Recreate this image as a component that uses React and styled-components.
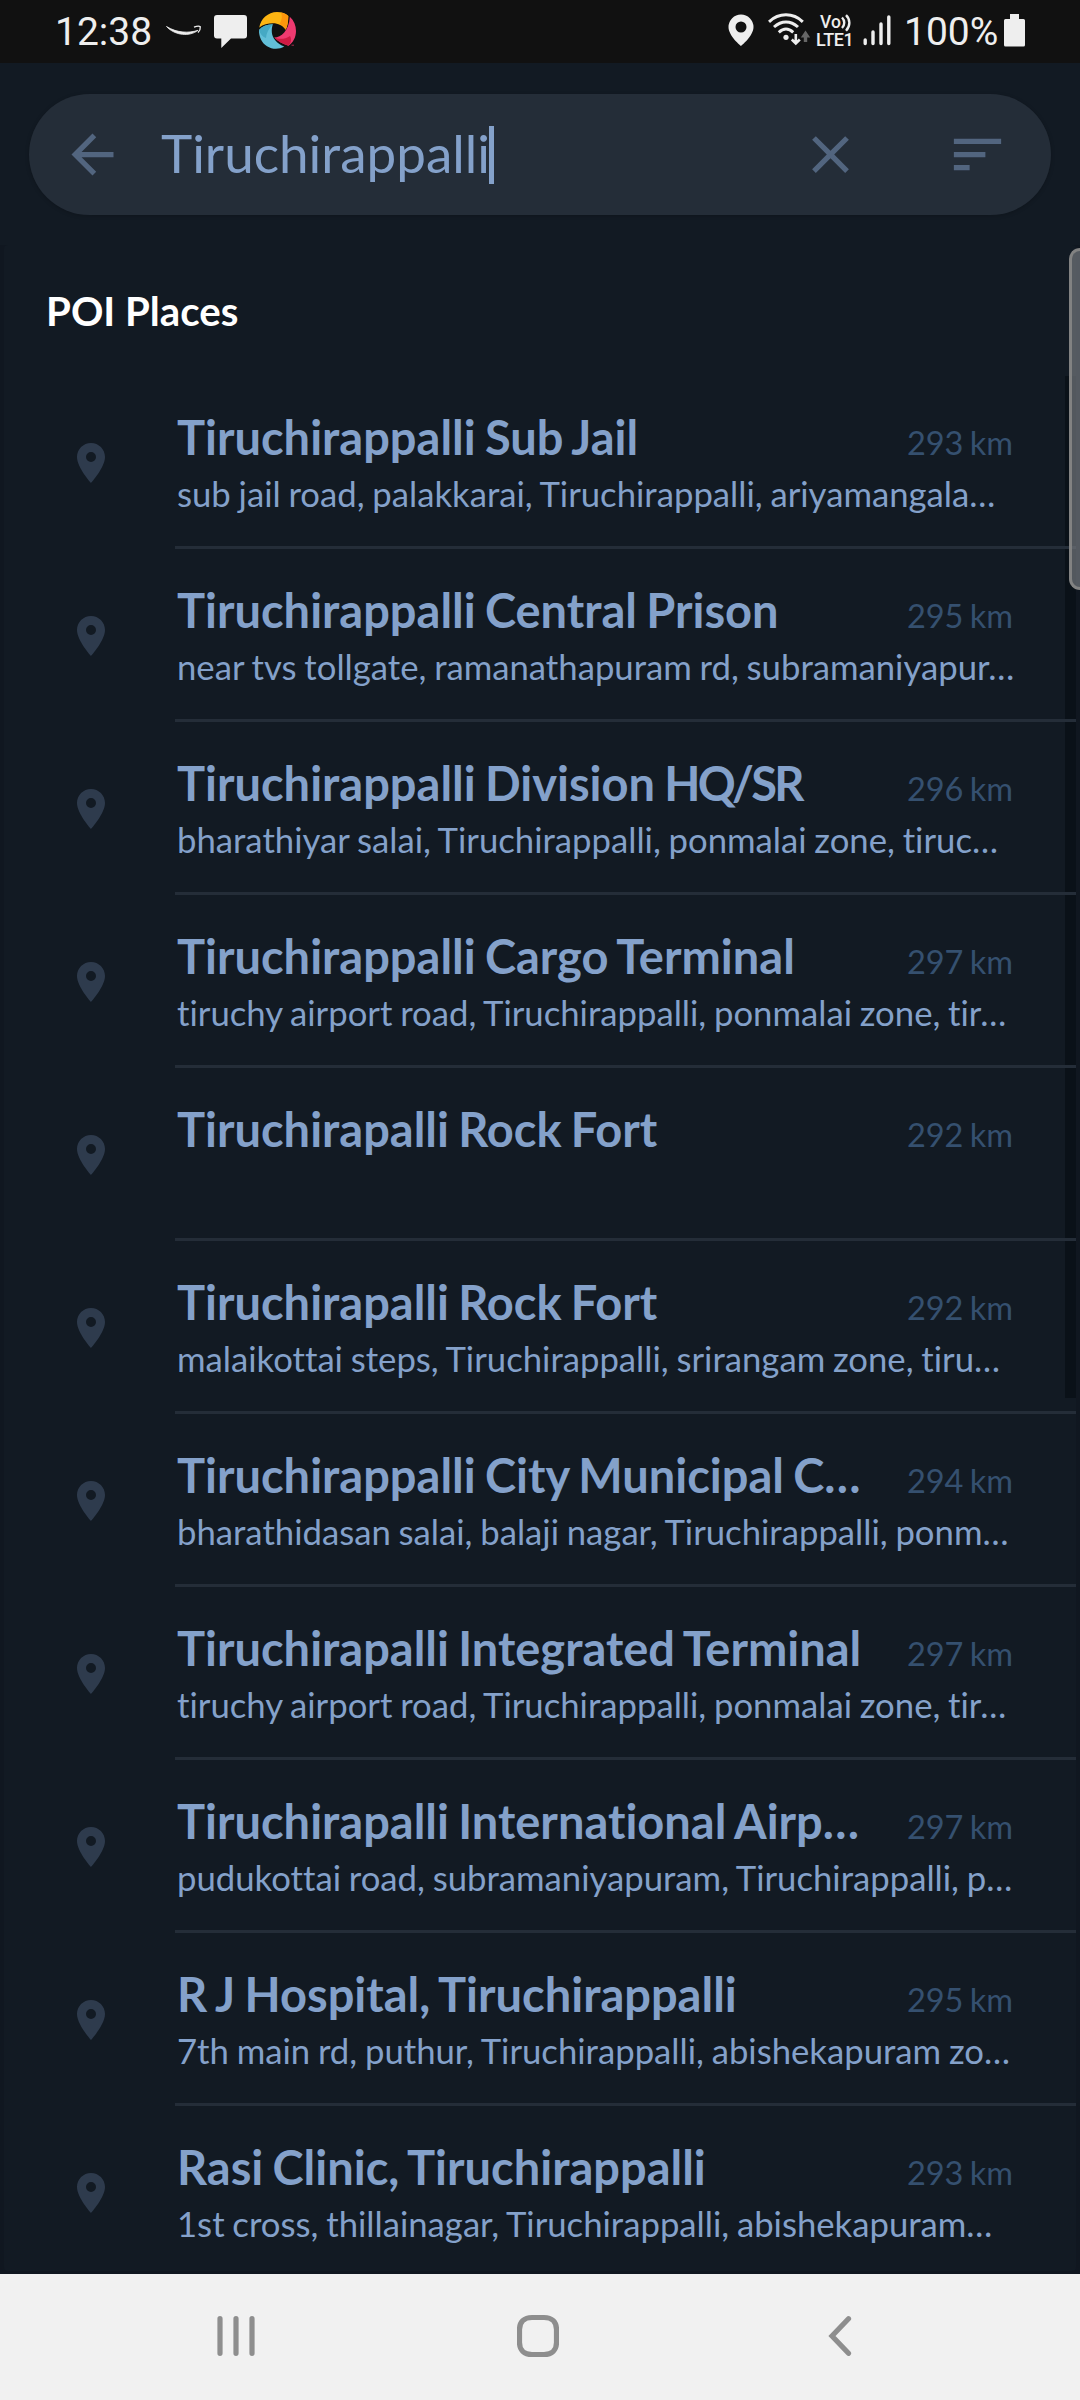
import React from "react";
import styled, { createGlobalStyle } from "styled-components";

const GlobalStyle = createGlobalStyle`
  * { box-sizing: border-box; }
  html, body { margin: 0; padding: 0; background: #121a23; }
  svg { display: block; flex: none; }
`;

const Screen = styled.div`
  width: 1080px;
  height: 2400px;
  display: flex;
  flex-direction: column;
  overflow: hidden;
  background: #121a23;
  font-family: Lato, "Open Sans", sans-serif;
  font-variant-ligatures: none;
`;

const StatusBar = styled.header`
  flex: none;
  height: 63px;
  display: flex;
  justify-content: space-between;
  background: #111111;
  color: #eeeeee;
  font-family: Roboto, sans-serif;
  padding: 0 55px 0 55px;
`;

const StatusGroup = styled.div`
  display: flex;
  align-items: flex-start;
`;

const StatusText = styled.span`
  width: ${(p) => p.$width}px;
  margin-left: ${(p) => p.$gap || 0}px;
  font-size: 39px;
  line-height: 46px;
  padding-top: 9px;
  white-space: nowrap;
`;

const StatusIcon = styled.svg`
  width: ${(p) => p.$width}px;
  height: 63px;
  margin-left: ${(p) => p.$gap || 0}px;
`;

const Volte = styled.div`
  width: 40px;
  height: 63px;
  margin-left: 5px;
  padding-top: 12px;
  font-weight: 500;
`;

const VolteTop = styled.div`
  display: flex;
  padding-left: 4px;
  height: 18px;
  font-size: 17.5px;
  line-height: 20px;
`;

const VolteBottom = styled.div`
  font-size: 18px;
  line-height: 20px;
  letter-spacing: -0.4px;
`;

const SearchArea = styled.div`
  flex: none;
  height: 182px;
  padding: 31px 29px 0 29px;
`;

const SearchBar = styled.div`
  height: 121px;
  border-radius: 61px;
  background: #242d38;
  box-shadow: 0 1px 4px rgba(0, 0, 0, 0.2);
  display: flex;
  align-items: center;
  padding: 0 42px 0 32px;
  color: #52657f;
`;

const SearchField = styled.div`
  flex: 1;
  display: flex;
  align-items: center;
  margin-left: 37px;
`;

const Query = styled.span`
  padding-bottom: 4px;
  color: #84a1ca;
  font-size: 53px;
  line-height: 64px;
  white-space: nowrap;
`;

const Caret = styled.span`
  width: 5px;
  height: 58px;
  margin-left: -1px;
  background: #84a1ca;
`;

const ToolIcon = styled.svg`
  width: 63px;
  height: 63px;
  fill: currentColor;
  margin-left: ${(p) => p.$gap || 0}px;
`;

const Panel = styled.main`
  position: relative;
  flex: none;
  height: 2029px;
  background: #101720;
  padding: 0 4px 3px;
`;

const Card = styled.section`
  position: relative;
  height: 2026px;
  background: #121a23;
  border-radius: 4px;
  overflow: hidden;
`;

const SectionTitle = styled.h2`
  margin: 0;
  height: 131px;
  padding: 40px 0 0 42px;
  color: #ffffff;
  font-size: 40.2px;
  font-weight: 700;
  line-height: 51px;
`;

const List = styled.ul`
  position: relative;
  list-style: none;
  margin: 0;
  padding: 0;
`;

const Row = styled.li`
  display: flex;
  height: 173px;
`;

const PinSlot = styled.div`
  width: 171px;
  display: flex;
  justify-content: center;
  padding: 63px 0 0 2px;
`;

const PinIcon = styled.svg`
  width: 48px;
  height: 48px;
  fill: #2e3b4d;
`;

const RowBody = styled.div`
  flex: 1;
  min-width: 0;
  padding: 31px 63px 0 2px;
  border-bottom: 3px solid #242d38;
`;

const RowHead = styled.div`
  display: flex;
  height: 60px;
  justify-content: space-between;
  align-items: baseline;
`;

const Name = styled.span`
  color: #84a1ca;
  font-size: 47px;
  font-weight: 700;
  line-height: 60px;
  word-spacing: -2.2px;
  white-space: nowrap;
`;

const Tight = styled.span`
  letter-spacing: -2.8px;
`;

const Distance = styled.span`
  color: #35506f;
  font-size: 32.5px;
  line-height: 40px;
  word-spacing: -2px;
  white-space: nowrap;
`;

const Address = styled.p`
  margin: 5px 0 0;
  color: #84a1ca;
  font-size: 34.7px;
  line-height: 44px;
  word-spacing: -1.1px;
  white-space: nowrap;
`;

const ScrollTrack = styled.div`
  position: absolute;
  top: 131px;
  right: 0;
  width: 11px;
  height: 1022px;
  background: #0a1118;
`;

const ScrollThumb = styled.div`
  position: absolute;
  top: 3px;
  right: 0;
  width: 11px;
  height: 342px;
  border: 3px solid #828282;
  border-right: 0;
  border-radius: 12px 0 0 12px;
  background: rgba(112, 117, 122, 0.72);
`;

const NavBar = styled.nav`
  flex: 1;
  display: flex;
  align-items: center;
  padding: 0 0 2px 217px;
  background: #f1f1f1;
`;

const NavIcon = styled.svg`
  width: ${(p) => p.$width}px;
  height: 44px;
  margin-left: ${(p) => p.$gap || 0}px;
  fill: none;
  stroke: #8e8e8e;
  stroke-width: 5.2;
`;

const PLACES = [
  ["Tiruchirappalli Sub Jail", "293 km", "sub jail road, palakkarai, Tiruchirappalli, ariyamangala…"],
  ["Tiruchirappalli Central Prison", "295 km", "near tvs tollgate, ramanathapuram rd, subramaniyapur…"],
  [<>Tiruchirappalli Division <Tight>HQ/SR</Tight></>, "296 km", "bharathiyar salai, Tiruchirappalli, ponmalai zone, tiruc…"],
  ["Tiruchirappalli Cargo Terminal", "297 km", "tiruchy airport road, Tiruchirappalli, ponmalai zone, tir…"],
  ["Tiruchirapalli Rock Fort", "292 km", ""],
  ["Tiruchirapalli Rock Fort", "292 km", "malaikottai steps, Tiruchirappalli, srirangam zone, tiru…"],
  ["Tiruchirappalli City Municipal C…", "294 km", "bharathidasan salai, balaji nagar, Tiruchirappalli, ponm…"],
  ["Tiruchirapalli Integrated Terminal", "297 km", "tiruchy airport road, Tiruchirappalli, ponmalai zone, tir…"],
  ["Tiruchirapalli International Airp…", "297 km", "pudukottai road, subramaniyapuram, Tiruchirappalli, p…"],
  ["R J Hospital, Tiruchirappalli", "295 km", "7th main rd, puthur, Tiruchirappalli, abishekapuram zo…"],
  ["Rasi Clinic, Tiruchirappalli", "293 km", "1st cross, thillainagar, Tiruchirappalli, abishekapuram…"],
];

const PIN_PATH =
  "M12 2C8.13 2 5 5.13 5 9c0 5.25 7 13 7 13s7-7.75 7-13c0-3.87-3.13-7-7-7zm0 9.5a2.5 2.5 0 0 1 0-5 2.5 2.5 0 0 1 0 5z";

function Place({ name, distance, address }) {
  return (
    <Row>
      <PinSlot>
        <PinIcon viewBox="0 0 24 24">
          <path d={PIN_PATH} />
        </PinIcon>
      </PinSlot>
      <RowBody>
        <RowHead>
          <Name>{name}</Name>
          <Distance>{distance}</Distance>
        </RowHead>
        {address && <Address>{address}</Address>}
      </RowBody>
    </Row>
  );
}

function Status() {
  return (
    <StatusBar>
      <StatusGroup>
        <StatusText $width={97}>12:38</StatusText>
        <StatusIcon $width={36} $gap={14} viewBox="166 0 36 63">
          <path d="M166.500 26.500C175 35.800 190 36.800 198 30.300C189 33.300 177 33 166.500 26.500Z" fill="#eee" stroke="#eee" strokeWidth="0.800" />
          <path d="M194 27.200C197 26 199.500 26 200.300 26.800C200.500 28.500 199.500 31 198 32.500" fill="none" stroke="#eee" strokeWidth="1.300" />
        </StatusIcon>
        <StatusIcon $width={34} $gap={12} viewBox="214 0 34 63">
          <path d="M217 15H244a3 3 0 0 1 3 3V35.500a3 3 0 0 1-3 3H231L221.300 48V38.500H217a3 3 0 0 1-3-3V18a3 3 0 0 1 3-3Z" fill="#eee" />
        </StatusIcon>
        <StatusIcon $width={38} $gap={10} viewBox="258 0 38 63">
          <path d="M259.300 27.500C260.500 19 268 12 277 12C282 12 286 13.500 288.300 16C288.200 22 287.500 26 285.700 29.800C283 25.500 278 23.300 273 23.300C268 23.300 263 24.500 259.300 27.500Z" fill="#fdb512" />
          <path d="M281 12.500C284.500 13.200 286.500 14.500 288.300 16C288.200 22 287.500 26 285.700 29.800C284 27 282 25 279.500 24C282 20 282.500 16 281 12.500Z" fill="#fd960c" />
          <path d="M289.800 16.800C294 20.500 296 25.500 296 31C296 37.500 293 42.500 288.500 45.800C283 44 278 41.500 274.300 37.600C281 37.600 289 31 289.800 16.800Z" fill="#ee3a70" />
          <path d="M274.300 37.600C279 39.500 285 39.500 290 36C292 39.500 291 43 288.500 45.800C283 44 278 41.500 274.300 37.600Z" fill="#cf1b44" />
          <path d="M291.500 45.200H294" stroke="#a52a50" strokeWidth="1" />
          <path d="M259 30C262 26.500 267 24.500 272.800 24.300C271 30 271.500 36 275 40C277.500 43 281 45.500 284.300 46.600C279 49.800 272 49.500 267 46.300C261.500 42.700 258.800 36.500 259 30Z" fill="#62bfd8" />
          <path d="M259 30C262 26.500 267 24.500 272.800 24.300C268.500 29 266.500 33 266 38C263 37 260 34 259 30Z" fill="#45a9c4" />
        </StatusIcon>
      </StatusGroup>
      <StatusGroup>
        <StatusIcon $width={26} viewBox="728.500 0 26 63">
          <path fillRule="evenodd" d="M741.500 14.500A12.500 12.500 0 0 1 754 27C754 36 741.500 46 741.500 46S729 36 729 27A12.500 12.500 0 0 1 741.500 14.500ZM741.500 21.500a5.500 5.500 0 1 0 0 11a5.500 5.500 0 1 0 0-11Z" fill="#eee" />
        </StatusIcon>
        <StatusIcon $width={43} $gap={14} viewBox="768.500 0 43 63">
          <g fill="none" stroke="#eee" strokeWidth="3">
            <path d="M769.500 21.800C779.500 12.500 793.500 12.500 803.300 21.800" />
            <path d="M774.500 27C782 20.200 791 20.200 798.500 27" />
            <path d="M779.300 32.300C784 28 789 28 793.700 32.300" />
          </g>
          <circle cx="786.500" cy="37.300" r="2.600" fill="#eee" />
          <path d="M796.300 34V43M792.300 39.500L796.300 43.500L800.300 39.500" fill="none" stroke="#eee" strokeWidth="2.600" />
          <path d="M801.300 37.500L806 30.500L810.700 37.500H807.700V42H804.300V37.500Z" fill="#666" />
        </StatusIcon>
        <Volte>
          <VolteTop>
            <span>Vo</span>
            <svg width="11" height="20" viewBox="0 0 11 20" fill="none" stroke="#eee" strokeWidth="2.400">
              <path d="M1 5.500C4 8.500 4 13 1 16" />
              <path d="M5 3.200C9.500 7.500 9.500 14 5 18.800" />
            </svg>
          </VolteTop>
          <VolteBottom>LTE1</VolteBottom>
        </Volte>
        <StatusIcon $width={28} $gap={7} viewBox="862.500 0 28 63">
          <path d="M864.700 40V43.500M872.500 32V43.500M880.500 24V43.500M888.300 17V43.500" stroke="#eee" strokeWidth="3.400" strokeLinecap="round" />
        </StatusIcon>
        <StatusText $width={95} $gap={13}>100%</StatusText>
        <StatusIcon $width={21} $gap={5} viewBox="1004 0 21 63">
          <path d="M1010 14H1019V19H1023.500A1.500 1.500 0 0 1 1025 20.500V45A1.500 1.500 0 0 1 1023.500 46.500H1005.500A1.500 1.500 0 0 1 1004 45V20.500A1.500 1.500 0 0 1 1005.500 19H1010Z" fill="#eee" />
        </StatusIcon>
      </StatusGroup>
    </StatusBar>
  );
}

export default function App() {
  return (
    <Screen>
      <GlobalStyle />
      <Status />
      <SearchArea>
        <SearchBar>
          <ToolIcon viewBox="0 0 24 24">
            <path d="M20 11H7.830l5.590-5.590L12 4l-8 8 8 8 1.410-1.410L7.830 13H20v-2z" />
          </ToolIcon>
          <SearchField>
            <Query>Tiruchirappalli</Query>
            <Caret />
          </SearchField>
          <ToolIcon viewBox="0 0 24 24">
            <path d="M19 6.410L17.590 5 12 10.590 6.410 5 5 6.410 10.590 12 5 17.590 6.410 19 12 13.410 17.590 19 19 17.590 13.410 12z" />
          </ToolIcon>
          <ToolIcon $gap={84} viewBox="0 0 24 24">
            <path d="M3 18h6v-2H3v2zM3 6v2h18V6H3zm0 7h12v-2H3v2z" />
          </ToolIcon>
        </SearchBar>
      </SearchArea>
      <Panel>
        <Card>
          <ScrollTrack />
          <SectionTitle>POI Places</SectionTitle>
          <List>
            {PLACES.map(([name, distance, address], i) => (
              <Place key={i} name={name} distance={distance} address={address} />
            ))}
          </List>
        </Card>
        <ScrollThumb />
      </Panel>
      <NavBar>
        <NavIcon $width={38} viewBox="0 0 38 44" strokeLinecap="round">
          <path d="M3 4.700V39.300M19 4.700V39.300M35 4.700V39.300" />
        </NavIcon>
        <NavIcon $width={42} $gap={262} viewBox="0 0 42 44">
          <path d="M15 3.500H27C35 3.500 39.500 8 39.500 15.500V28.500C39.500 36 35 40.500 27 40.500H15C7 40.500 2.500 36 2.500 28.500V15.500C2.500 8 7 3.500 15 3.500Z" />
        </NavIcon>
        <NavIcon $width={24} $gap={269} viewBox="0 0 24 44" strokeLinecap="round">
          <path d="M20.500 4.700L4 22L20.500 39.300" />
        </NavIcon>
      </NavBar>
    </Screen>
  );
}
